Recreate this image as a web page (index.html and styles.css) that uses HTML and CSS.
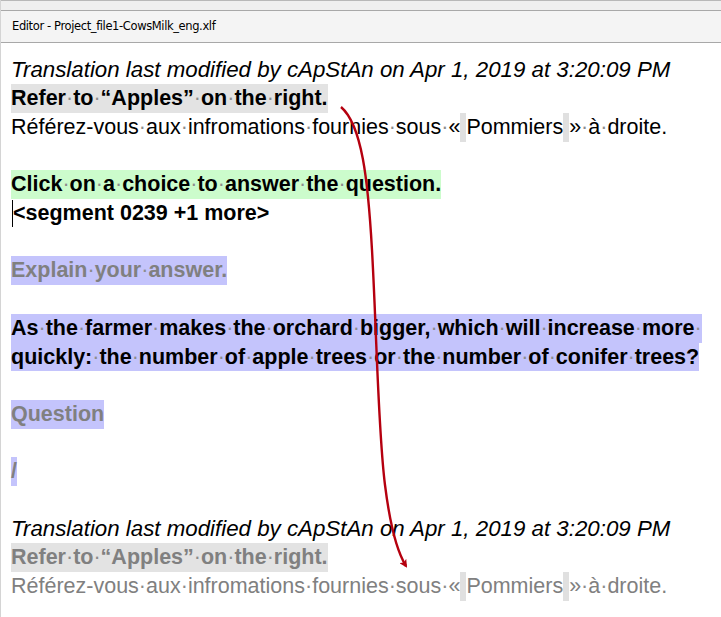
FILE: index.html
```html
<!DOCTYPE html>
<html>
<head>
<meta charset="utf-8">
<link rel="stylesheet" href="styles.css">
</head>
<body>
<div class="window">
  <div class="topstrip"></div>
  <div class="header">Editor - Project_file1-CowsMilk_eng.xlf</div>
  <div class="doc">
    <div class="line meta">Translation last modified by cApStAn on Apr 1, 2019 at 3:20:09 PM</div>
    <div class="line"><span class="hl bg-gray b">Refer<span class="d">·</span>to<span class="d">·</span>“Apples”<span class="d">·</span>on<span class="d">·</span>the<span class="d">·</span>right.</span></div>
    <div class="line">Référez-vous<span class="d">·</span>aux<span class="d">·</span>infromations<span class="d">·</span>fournies<span class="d">·</span>sous<span class="d">·</span>«<span class="hl nb">&nbsp;</span>Pommiers<span class="hl nb">&nbsp;</span>»<span class="d">·</span>à<span class="d">·</span>droite.</div>
    <div class="line"></div>
    <div class="line"><span class="hl bg-green b">Click<span class="d">·</span>on<span class="d">·</span>a<span class="d">·</span>choice<span class="d">·</span>to<span class="d">·</span>answer<span class="d">·</span>the<span class="d">·</span>question.</span></div>
    <div class="line b"><span class="caret"></span>&lt;segment 0239 +1 more&gt;</div>
    <div class="line"></div>
    <div class="line"><span class="hl bg-blue b grey">Explain<span class="d">·</span>your<span class="d">·</span>answer.</span></div>
    <div class="line"></div>
    <div class="line"><span class="hl bg-blue b">As<span class="d">·</span>the<span class="d">·</span>farmer<span class="d">·</span>makes<span class="d">·</span>the<span class="d">·</span>orchard<span class="d">·</span>bigger,<span class="d">·</span>which<span class="d">·</span>will<span class="d">·</span>increase<span class="d">·</span>more<span class="d">·</span></span></div>
    <div class="line"><span class="hl bg-blue b">quickly:<span class="d">·</span>the<span class="d">·</span>number<span class="d">·</span>of<span class="d">·</span>apple<span class="d">·</span>trees<span class="d">·</span>or<span class="d">·</span>the<span class="d">·</span>number<span class="d">·</span>of<span class="d">·</span>conifer<span class="d">·</span>trees?</span></div>
    <div class="line"></div>
    <div class="line"><span class="hl bg-blue b grey">Question</span></div>
    <div class="line"></div>
    <div class="line"><span class="hl bg-blue b grey">/</span></div>
    <div class="line"></div>
    <div class="line meta">Translation last modified by cApStAn on Apr 1, 2019 at 3:20:09 PM</div>
    <div class="line"><span class="hl bg-gray b grey">Refer<span class="d">·</span>to<span class="d">·</span>“Apples”<span class="d">·</span>on<span class="d">·</span>the<span class="d">·</span>right.</span></div>
    <div class="line grey">Référez-vous<span class="d">·</span>aux<span class="d">·</span>infromations<span class="d">·</span>fournies<span class="d">·</span>sous<span class="d">·</span>«<span class="hl nb">&nbsp;</span>Pommiers<span class="hl nb">&nbsp;</span>»<span class="d">·</span>à<span class="d">·</span>droite.</div>
  </div>
  <svg class="arrow" width="721" height="617" viewBox="0 0 721 617">
    <defs>
      <marker id="head" markerWidth="8" markerHeight="8" refX="6" refY="4" orient="auto" markerUnits="userSpaceOnUse">
        <path d="M0,0 L8,4 L0,8 L2,4 Z" fill="#b5000f"/>
      </marker>
    </defs>
    <path d="M341,107 C362,125 368,180 372,250 C377,340 378,430 385,485 C390,525 396,550 406,566" fill="none" stroke="#b5000f" stroke-width="2.4" marker-end="url(#head)"/>
  </svg>
</div>
</body>
</html>
```

FILE: styles.css
```css
html, body {
  margin: 0;
  padding: 0;
  background: #ffffff;
}

.window {
  position: relative;
  width: 721px;
  height: 617px;
  overflow: hidden;
  background: #ffffff;
  border-left: 1px solid #d4d4d4;
  box-sizing: border-box;
}

.topstrip {
  height: 9px;
  border-top: 1px solid #b8b8b8;
  border-bottom: 1px solid #a8a8a8;
  background: #efefef;
}

.header {
  height: 31px;
  line-height: 31px;
  padding-left: 11px;
  background: #f4f4f4;
  border-bottom: 1px solid #a8a8a8;
  font-family: "DejaVu Sans", sans-serif;
  font-size: 11.5px;
  letter-spacing: -0.38px;
  color: #000;
}

.doc {
  padding: 13px 0 0 10px;
  font-family: "Liberation Sans", Arial, sans-serif;
  font-size: 21.5px;
  color: #000;
}

.line {
  height: 28.7px;
  line-height: 28.7px;
  white-space: nowrap;
}

.meta {
  font-style: italic;
  font-size: 22.3px;
}

.b {
  font-weight: bold;
}

.grey {
  color: #808080;
}

.hl {
  padding: 2.35px 0;
}

.bg-gray {
  background: #e3e3e3;
}

.bg-green {
  background: #ccfccc;
}

.bg-blue {
  background: #c4c4fc;
}

.nb {
  background: #e0e0e0;
}

.d {
  font-weight: normal;
  color: #8c8c8c;
}

.caret {
  display: inline-block;
  width: 1px;
  height: 27px;
  background: #000;
  vertical-align: -7px;
  margin-left: 1px;
}

.arrow {
  position: absolute;
  left: -1px;
  top: 0;
  pointer-events: none;
}
```
